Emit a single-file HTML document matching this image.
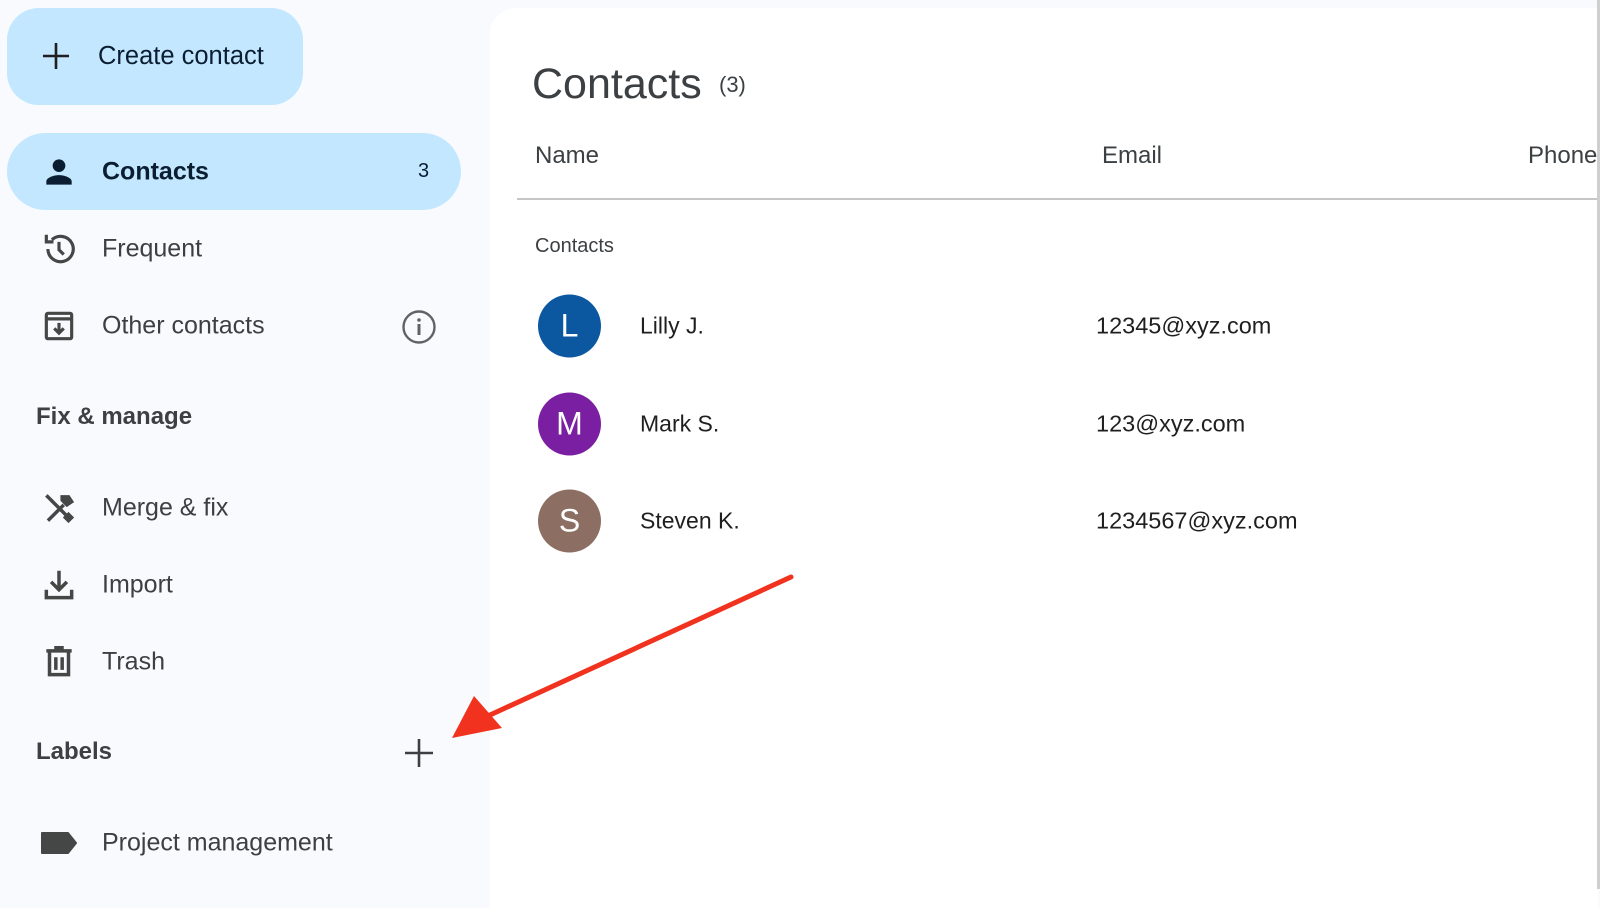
<!DOCTYPE html>
<html><head><meta charset="utf-8"><style>
*{margin:0;padding:0;box-sizing:border-box}
body{width:1600px;height:889px;overflow:hidden;background:#f8fafd;font-family:"Liberation Sans",Arial,sans-serif;color:#1f1f1f;position:relative}
.a{position:absolute}
.btn{left:7px;top:8px;width:296px;height:97px;background:#c2e7ff;border-radius:32px}
.pill{left:7px;top:133px;width:454px;height:77px;background:#c2e7ff;border-radius:39px}
.item{position:absolute;left:102px;font-size:25px;color:#3c4043;line-height:1;transform:translateY(-50%)}
.ic{position:absolute;left:40px;width:38px;height:38px;transform:translateY(-50%)}
.hd{position:absolute;left:36px;font-size:24px;font-weight:bold;color:#3c4043;transform:translateY(-50%)}
.main{left:490px;top:8px;width:1108px;height:900px;background:#fff;border-top-left-radius:26px}
.av{position:absolute;left:538px;width:63px;height:63px;border-radius:50%;color:#fff;font-size:32px;text-align:center;line-height:63px;transform:translateY(-50%)}
.nm{position:absolute;left:640px;font-size:23px;transform:translateY(-50%);color:#1f1f1f}
.em{position:absolute;left:1096px;font-size:23.5px;transform:translateY(-50%);color:#1f1f1f}
</style></head><body>
<div class="a btn"></div>
<svg class="a" style="left:40px;top:40px" width="32" height="32" viewBox="0 0 32 32"><path d="M16 3v26M3 16h26" stroke="#1f1f1f" stroke-width="2.6"/></svg>
<div class="a" style="left:98px;top:42px;font-size:25.5px;color:#0b1d30">Create contact</div>
<div class="a pill"></div>
<svg class="ic" style="top:172px" viewBox="0 0 24 24"><circle cx="12" cy="8" r="4" fill="#0b1d30"/><path d="M4 20v-2c0-2.5 5-4 8-4s8 1.5 8 4v2z" fill="#0b1d30"/></svg>
<div class="item" style="top:172px;font-weight:bold;color:#0b1d30">Contacts</div>
<div class="a" style="left:418px;top:160px;font-size:20px;color:#0b1d30">3</div>
<svg class="ic" style="top:249px" viewBox="0 0 24 24" fill="none" stroke="#444746" stroke-width="2"><path d="M5 12a8 8 0 1 0 2.5-5.8"/><path d="M4 3v4.5h4.5"/><path d="M12 7.5v5l3 3"/></svg>
<div class="item" style="top:249px">Frequent</div>
<svg class="ic" style="top:326px" viewBox="0 0 24 24" fill="none" stroke="#444746" stroke-width="2"><rect x="4" y="4" width="16" height="16" rx="1"/><path d="M4 7.5h16M12 10v6M9 13.5l3 3 3-3"/></svg>
<div class="item" style="top:326px">Other contacts</div>
<svg class="a" style="left:401px;top:309px" width="36" height="36" viewBox="0 0 36 36"><circle cx="18" cy="18" r="15.5" fill="none" stroke="#5f6368" stroke-width="2.4"/><rect x="16.5" y="15" width="3" height="11" fill="#5f6368"/><circle cx="18" cy="11" r="1.8" fill="#5f6368"/></svg>
<div class="hd" style="top:417px">Fix &amp; manage</div>
<svg class="ic" style="top:508px" viewBox="0 0 24 24" fill="none" stroke="#444746" stroke-width="2.2"><path d="M4 4l4 4M7 7l12 12M5 20l10-10"/><path d="M14 5l4 0 2 3-3 2-3-3z" fill="#444746"/><path d="M16 18l2 2 2-2-2-2z"/></svg>
<div class="item" style="top:508px">Merge &amp; fix</div>
<svg class="ic" style="top:585px" viewBox="0 0 24 24" fill="none" stroke="#444746" stroke-width="2.2"><path d="M12 3v12M7 10l5 5 5-5M4 15v5h16v-5"/></svg>
<div class="item" style="top:585px">Import</div>
<svg class="ic" style="top:662px" viewBox="0 0 24 24" fill="none" stroke="#444746" stroke-width="2.2"><path d="M4 5h16M9 3h6M6 5v15h12V5M10 9v8M14 9v8"/></svg>
<div class="item" style="top:662px">Trash</div>
<div class="hd" style="top:752px">Labels</div>
<svg class="a" style="left:403px;top:737px" width="32" height="32" viewBox="0 0 32 32"><path d="M16 2v28M2 16h28" stroke="#3c4043" stroke-width="2.6"/></svg>
<svg class="ic" style="top:843px" viewBox="0 0 38 38"><path d="M2 9h26l8 10-8 10H2z" fill="#444746" stroke="#444746" stroke-linejoin="round" stroke-width="2"/></svg>
<div class="item" style="top:843px">Project management</div>

<div class="a main"></div>
<div class="a" style="left:532px;top:60px;font-size:43px;color:#3c4043">Contacts</div>
<div class="a" style="left:719px;top:72px;font-size:22px;color:#3c4043">(3)</div>
<div class="a" style="left:535px;top:142px;font-size:24px;color:#3c4043">Name</div>
<div class="a" style="left:1102px;top:142px;font-size:24px;color:#3c4043">Email</div>
<div class="a" style="left:1528px;top:142px;font-size:24px;color:#3c4043">Phone</div>
<div class="a" style="left:517px;top:198px;width:1083px;height:2px;background:#c4c7c5"></div>
<div class="a" style="left:535px;top:235px;font-size:20px;color:#3c4043">Contacts</div>
<div class="av" style="top:326px;background:#0b57a0">L</div>
<div class="nm" style="top:326px">Lilly J.</div><div class="em" style="top:326px">12345@xyz.com</div>
<div class="av" style="top:424px;background:#7b1fa2">M</div>
<div class="nm" style="top:424px">Mark S.</div><div class="em" style="top:424px">123@xyz.com</div>
<div class="av" style="top:521px;background:#8d6e63">S</div>
<div class="nm" style="top:521px">Steven K.</div><div class="em" style="top:521px">1234567@xyz.com</div>
<div class="a" style="left:1597px;top:0;width:3px;height:889px;background:#cfcfcf"></div>
<svg class="a" style="left:0;top:0" width="1600" height="889"><path d="M791 577L490 715" stroke="#f0321e" stroke-width="5" stroke-linecap="round"/><path d="M452 738L474 696 502 728z" fill="#f0321e"/></svg>
</body></html>
